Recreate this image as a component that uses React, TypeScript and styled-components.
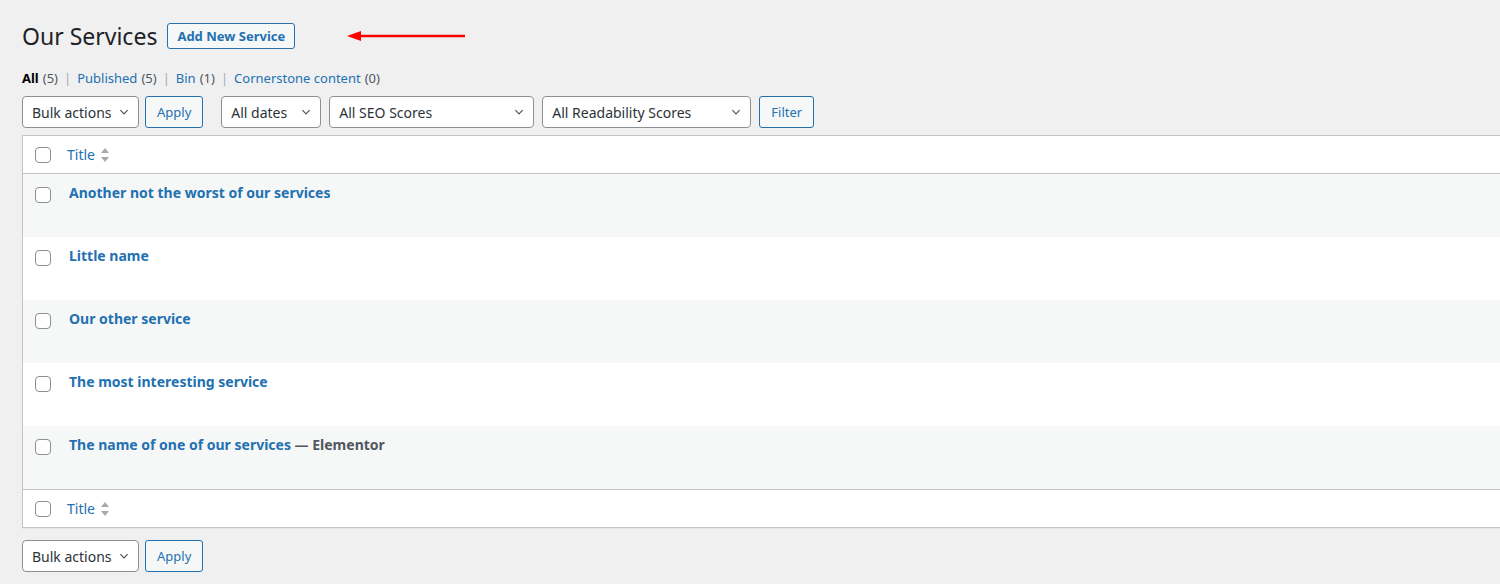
import styled, { createGlobalStyle } from "styled-components";

const GlobalStyle = createGlobalStyle`
    html, body {
        margin: 0;
        padding: 0;
        background: #f0f0f1;
        overflow: hidden;
    }
    body {
        font-family: "Noto Sans", "Open Sans", sans-serif;
        color: #3c434a;
        font-size: 13px;
    }
`;

const Wrap = styled.div`
    padding: 18px 0 0 22px;
    width: 1500px;
    box-sizing: border-box;
`;

const HeadRow = styled.div`
    display: flex;
    align-items: center;
    gap: 10px;
    height: 36px;
`;

const Heading = styled.h1`
    margin: 0;
    font-size: 23px;
    font-weight: 400;
    color: #1d2327;
`;

const AddButton = styled.a`
    display: inline-flex;
    align-items: center;
    height: 24px;
    padding: 0 9px;
    border: 1px solid #2271b1;
    border-radius: 3px;
    background: #f6f7f7;
    color: #2271b1;
    font-size: 13px;
    font-weight: 700;
    text-decoration: none;
`;

const Arrow = styled.svg`
    margin-left: 40px;
`;

const Views = styled.ul`
    display: flex;
    list-style: none;
    margin: 0;
    padding: 0;
    height: 24px;
    margin-top: 12px;
    align-items: center;
    font-size: 13px;
    color: #50575e;
    li + li::before {
        content: "|";
        color: #a7aaad;
        margin: 0 6px;
    }
`;

const ViewItem = styled.li<{ $current?: boolean }>`
    a {
        color: ${(p) => (p.$current ? "#000" : "#2271b1")};
        font-weight: ${(p) => (p.$current ? 700 : 400)};
        text-decoration: none;
    }
`;

const Count = styled.span`
    color: #50575e;
    margin-left: 4px;
`;

const Toolbar = styled.div<{ $top?: boolean }>`
    display: flex;
    align-items: center;
    gap: 6px;
    height: 32px;
    margin: ${(p) => (p.$top ? "6px 0 7px" : "12px 0 0")};
`;

const Group = styled.div<{ $gap?: number }>`
    display: flex;
    align-items: center;
    gap: 8px;
    margin-left: ${(p) => p.$gap ?? 0}px;
`;

const Select = styled.div<{ $w: number }>`
    box-sizing: border-box;
    width: ${(p) => p.$w}px;
    height: 32px;
    border: 1px solid #8c8f94;
    border-radius: 4px;
    background: #fff;
    display: flex;
    align-items: center;
    justify-content: space-between;
    padding: 0 8px 0 9px;
    font-size: 14px;
    color: #2c3338;
`;

const Button = styled.button`
    box-sizing: border-box;
    height: 32px;
    padding: 0 11px;
    border: 1px solid #2271b1;
    border-radius: 3px;
    background: #f6f7f7;
    color: #2271b1;
    font-family: inherit;
    font-size: 13px;
`;

const Table = styled.div`
    border: 1px solid #c3c4c7;
    border-right: none;
    background: #fff;
    box-shadow: 0 1px 1px rgba(0, 0, 0, 0.04);
`;

const HeadCell = styled.div<{ $foot?: boolean }>`
    display: flex;
    align-items: center;
    height: 37px;
    border-top: ${(p) => (p.$foot ? "1px solid #c3c4c7" : "none")};
    border-bottom: ${(p) => (p.$foot ? "none" : "1px solid #c3c4c7")};
`;

const Row = styled.div<{ $alt?: boolean }>`
    display: flex;
    align-items: flex-start;
    height: 63px;
    background: ${(p) => (p.$alt ? "#f6f7f7" : "#fff")};
`;

const CheckCell = styled.div<{ $row?: boolean }>`
    width: 40px;
    display: flex;
    justify-content: center;
    padding-top: ${(p) => (p.$row ? "13px" : "0")};
`;

const Check = styled.span`
    box-sizing: border-box;
    width: 16px;
    height: 16px;
    border: 1px solid #8c8f94;
    border-radius: 4px;
    background: #fff;
`;

const SortTitle = styled.a`
    display: flex;
    align-items: center;
    gap: 5px;
    margin-left: 4px;
    color: #2271b1;
    font-size: 14px;
    text-decoration: none;
`;

const TitleCell = styled.div`
    padding-top: 9px;
    margin-left: 6px;
    font-size: 14px;
    font-weight: 700;
    color: #50575e;
    a {
        color: #2271b1;
        text-decoration: none;
    }
`;

const Chevron = () => (
    <svg width="12" height="12" viewBox="0 0 20 20">
        <path d="M4 7l6 6 6-6" fill="none" stroke="#50575e" strokeWidth="2" />
    </svg>
);

const SortIcon = () => (
    <svg width="10" height="16" viewBox="0 0 10 16">
        <path d="M5 1l4 5H1z M5 15l4-5H1z" fill="#a7aaad" />
    </svg>
);

const services = [
    { name: "Another not the worst of our services" },
    { name: "Little name" },
    { name: "Our other service" },
    { name: "The most interesting service" },
    { name: "The name of one of our services", state: "Elementor" },
];

const views = [
    { label: "All", count: 5, current: true },
    { label: "Published", count: 5 },
    { label: "Bin", count: 1 },
    { label: "Cornerstone content", count: 0 },
];

function App() {
    return (
        <Wrap>
            <GlobalStyle />
            <HeadRow>
                <Heading>Our Services</Heading>
                <AddButton href="#">Add New Service</AddButton>
                <Arrow width="122" height="12" viewBox="0 0 122 12">
                    <path d="M14 6H120" stroke="#f00" strokeWidth="2.5" />
                    <path d="M2 6L16 1V11Z" fill="#f00" />
                </Arrow>
            </HeadRow>
            <Views>
                {views.map((v) => (
                    <ViewItem key={v.label} $current={v.current}>
                        <a href="#">{v.label}</a>
                        <Count>({v.count})</Count>
                    </ViewItem>
                ))}
            </Views>
            <Toolbar $top>
                <Select $w={117}>
                    Bulk actions <Chevron />
                </Select>
                <Button>Apply</Button>
                <Group $gap={12}>
                    <Select $w={100}>
                        All dates <Chevron />
                    </Select>
                    <Select $w={205}>
                        All SEO Scores <Chevron />
                    </Select>
                    <Select $w={209}>
                        All Readability Scores <Chevron />
                    </Select>
                    <Button>Filter</Button>
                </Group>
            </Toolbar>
            <Table>
                <HeadCell>
                    <CheckCell>
                        <Check />
                    </CheckCell>
                    <SortTitle href="#">
                        Title <SortIcon />
                    </SortTitle>
                </HeadCell>
                {services.map((s, i) => (
                    <Row key={s.name} $alt={i % 2 === 0}>
                        <CheckCell $row>
                            <Check />
                        </CheckCell>
                        <TitleCell>
                            <a href="#">{s.name}</a>
                            {s.state && <> — {s.state}</>}
                        </TitleCell>
                    </Row>
                ))}
                <HeadCell $foot>
                    <CheckCell>
                        <Check />
                    </CheckCell>
                    <SortTitle href="#">
                        Title <SortIcon />
                    </SortTitle>
                </HeadCell>
            </Table>
            <Toolbar>
                <Select $w={117}>
                    Bulk actions <Chevron />
                </Select>
                <Button>Apply</Button>
            </Toolbar>
        </Wrap>
    );
}

export default App;
